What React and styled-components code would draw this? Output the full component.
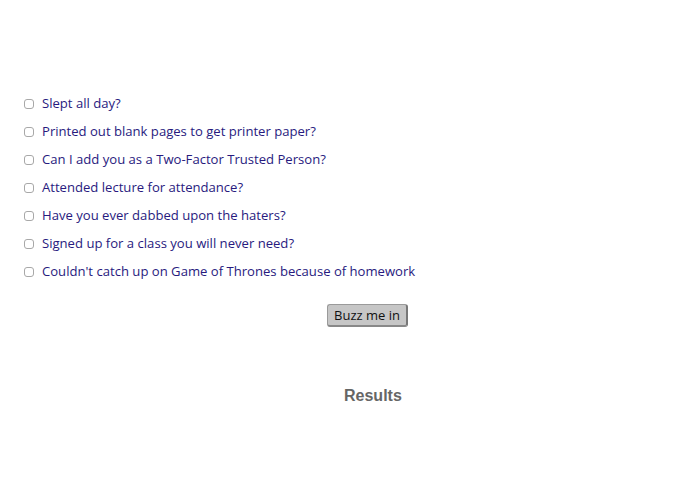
import React from "react";
import styled, { createGlobalStyle } from "styled-components";

const questions = [
  "Slept all day?",
  "Printed out blank pages to get printer paper?",
  "Can I add you as a Two-Factor Trusted Person?",
  "Attended lecture for attendance?",
  "Have you ever dabbed upon the haters?",
  "Signed up for a class you will never need?",
  "Couldn't catch up on Game of Thrones because of homework",
];

export default function App() {
  return (
    <>
      <GlobalStyle />
      <Page>
        <Form>
          <List>
            {questions.map((q) => (
              <Row key={q}>
                <Box type="checkbox" />
                <Label>{q}</Label>
              </Row>
            ))}
          </List>
          <ButtonRow>
            <Buzz type="button">Buzz me in</Buzz>
          </ButtonRow>
        </Form>
        <Results>Results</Results>
      </Page>
    </>
  );
}

const GlobalStyle = createGlobalStyle`
  body {
    margin: 0;
    background: #ffffff;
  }
`;

const Page = styled.div`
  width: 695px;
  height: 494px;
  padding-top: 93px;
  box-sizing: border-box;
`;

const Form = styled.form``;

const List = styled.div`
  display: flex;
  flex-direction: column;
  gap: 9px;
  padding-left: 24px;
`;

const Row = styled.label`
  display: flex;
  align-items: center;
  height: 19px;
  font-family: "Open Sans", sans-serif;
  font-size: 13.1px;
  color: #281a7e;
`;

const Box = styled.input`
  appearance: none;
  width: 10px;
  height: 10px;
  margin: 2px 8px 0 0;
  border: 1px solid #a8a8a8;
  border-radius: 3px;
  background: #fff;
`;

const Label = styled.span``;

const ButtonRow = styled.div`
  display: flex;
  padding-left: 327px;
  margin-top: 24px;
`;

const Buzz = styled.button`
  height: 23px;
  width: 81px;
  padding: 0;
  font-family: "Open Sans", sans-serif;
  font-size: 13px;
  color: #111;
  background: #c6c6c6;
  border: 1px solid #9a9a9a;
  border-right: 2px solid #777;
  border-bottom: 2px solid #888;
  border-radius: 3px;
`;

const Results = styled.h3`
  margin: 60px 0 0 344px;
  font-family: "Liberation Sans", Arial, sans-serif;
  font-size: 16px;
  font-weight: bold;
  color: #666;
`;
